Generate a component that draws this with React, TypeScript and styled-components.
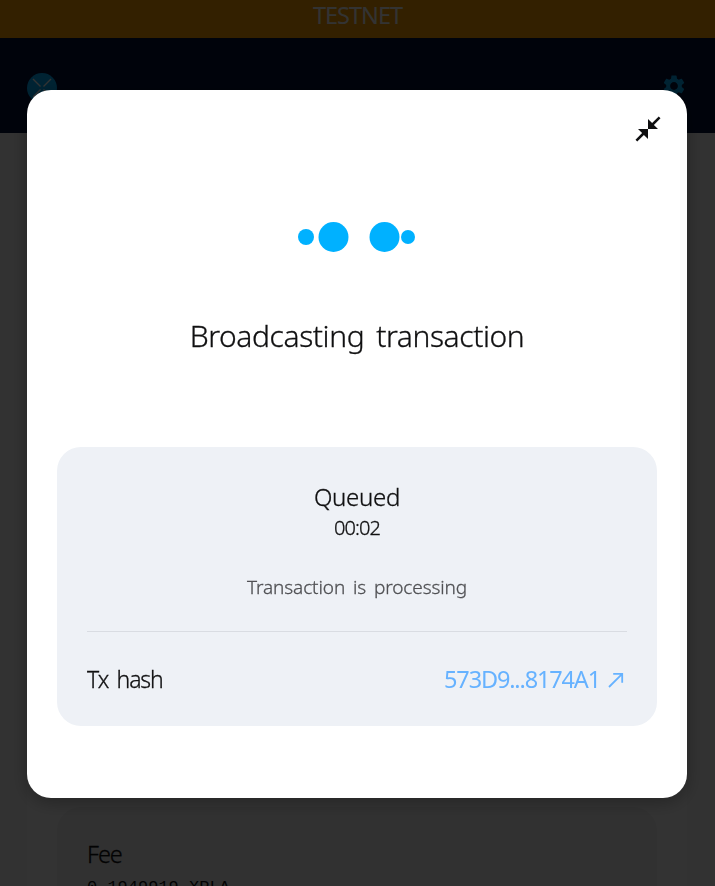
import React from 'react';
import styled, { createGlobalStyle } from 'styled-components';
import { MdCloseFullscreen, MdSettings } from 'react-icons/md';

const GlobalStyle = createGlobalStyle`
  * { box-sizing: border-box; }
  html, body { margin: 0; height: 100%; overflow: hidden; }
  body { font-family: "Noto Sans", "Open Sans", sans-serif; color: #101011; background: #fafafa; }
  h1, h2, p { margin: 0; font-weight: 300; -webkit-text-stroke: 0.3px currentColor; }
`;

const Page = styled.div`
  display: flex;
  flex-direction: column;
  height: 100vh;
  overflow: hidden;
`;

const NetworkBanner = styled.div`
  flex: none;
  height: 38px;
  background: #ffa000;
  color: #fff;
  text-align: center;
  font-size: 23.5px;
  line-height: 31px;
  letter-spacing: -1px;
`;

const Header = styled.header`
  flex: none;
  height: 95px;
  padding: 35px 28px 0 27px;
  display: flex;
  justify-content: space-between;
  align-items: flex-start;
  background: #00123a;
  color: #00b1ff;
`;

const SettingsIcon = styled(MdSettings)`
  width: 26px;
  height: 26px;
`;

const Body = styled.main`
  flex: 1;
  min-height: 0;
  margin: 0 28px 0 27px;
  padding: 674px 30px 0;
  background: #fff;
  overflow: hidden;
`;

const FeeCard = styled.section`
  height: 200px;
  border-radius: 24px;
  padding: 30px 30px 0;
  background: #f2f3f4;
`;

const FeeTitle = styled.h2`
  font-size: 23.5px;
  line-height: 34px;
  letter-spacing: -1px;
`;

const FeeAmount = styled.p`
  font-family: "Liberation Mono", monospace;
  font-size: 17px;
  line-height: 34px;
  -webkit-text-stroke: 0;
`;

const Overlay = styled.div`
  position: fixed;
  inset: 0;
  padding: 90px 28px 88px 27px;
  background: rgba(0, 0, 0, 0.8);
`;

const Dialog = styled.div`
  height: 708px;
  padding: 24px 24px 0 30px;
  display: flex;
  flex-direction: column;
  border-radius: 24px;
  background: #fff;
  box-shadow: 0 4px 18px rgba(0, 0, 0, 0.3);
`;

const CollapseButton = styled.button`
  align-self: flex-end;
  width: 30px;
  height: 30px;
  padding: 0;
  border: 0;
  background: none;
  color: #101011;
`;

const CollapseIcon = styled(MdCloseFullscreen)`
  display: block;
  width: 30px;
  height: 30px;
`;

const Loader = styled.svg`
  align-self: center;
  flex: none;
  width: 118px;
  height: 32px;
  margin: 77px 8px 0 0;
  fill: #00b1ff;
`;

const Title = styled.h1`
  margin: 61px 6px 0 0;
  text-align: center;
  font-size: 30px;
  line-height: 44px;
  letter-spacing: -0.4px;
  word-spacing: 4.5px;
`;

const Card = styled.section`
  height: 279px;
  flex: none;
  margin: 89px 6px 0 0;
  padding: 34px 30px 0;
  border-radius: 24px;
  background: #eef1f6;
  text-align: center;
`;

const Status = styled.h2`
  font-size: 24px;
  line-height: 32px;
  letter-spacing: -0.3px;
`;

const Timer = styled.p`
  font-size: 20px;
  line-height: 30px;
  letter-spacing: -0.9px;
`;

const Note = styled.p`
  margin-top: 29px;
  padding-bottom: 28px;
  font-size: 19px;
  line-height: 31px;
  letter-spacing: -0.1px;
  word-spacing: 3px;
  color: #505154;
  border-bottom: 1px solid #d9dce2;
`;

const HashRow = styled.div`
  height: 94px;
  padding-bottom: 1px;
  display: flex;
  align-items: center;
  justify-content: space-between;
  font-size: 23.5px;
`;

const HashLabel = styled.span`
  font-weight: 300;
  font-size: 23px;
  -webkit-text-stroke: 0.3px currentColor;
  letter-spacing: -1.1px;
  word-spacing: 3.5px;
`;

const HashLink = styled.a`
  display: flex;
  align-items: center;
  color: #66b2ff;
`;

const HashValue = styled.span`
  letter-spacing: -1.15px;
`;

const LinkArrow = styled.svg`
  width: 18px;
  height: 18px;
  margin: 2px 2px 0 7px;
  fill: none;
  stroke: currentColor;
  stroke-width: 1.8;
`;

export default function App() {
  return (
    <>
      <GlobalStyle />
      <Page>
        <NetworkBanner>TESTNET</NetworkBanner>
        <Header>
          <svg width="30" height="30" viewBox="0 0 30 30">
            <circle cx="15" cy="15" r="15" fill="#00b1ff" />
            <path d="M6 6l7.5 7.5M24 6l-7.5 7.5M6 24l7.5-7.5M24 24l-7.5-7.5" stroke="#ffffff" strokeWidth="1.4" />
          </svg>
          <SettingsIcon />
        </Header>
        <Body>
          <FeeCard>
            <FeeTitle>Fee</FeeTitle>
            <FeeAmount>0.1949919 XPLA</FeeAmount>
          </FeeCard>
        </Body>
      </Page>
      <Overlay>
        <Dialog role="dialog" aria-modal="true">
          <CollapseButton aria-label="Minimize"><CollapseIcon /></CollapseButton>
          <Loader viewBox="0 0 118 32">
            <circle cx="9" cy="16" r="8" />
            <circle cx="36.5" cy="16" r="15" />
            <circle cx="87.5" cy="16" r="15" />
            <circle cx="111" cy="16" r="7" />
          </Loader>
          <Title>Broadcasting transaction</Title>
          <Card>
            <Status>Queued</Status>
            <Timer>00:02</Timer>
            <Note>Transaction is processing</Note>
            <HashRow>
              <HashLabel>Tx hash</HashLabel>
              <HashLink>
                <HashValue>573D9...8174A1</HashValue>
                <LinkArrow viewBox="0 0 18 18">
                  <path d="M2 16L15.2 2.8M6.2 2.8h9v9" />
                </LinkArrow>
              </HashLink>
            </HashRow>
          </Card>
        </Dialog>
      </Overlay>
    </>
  );
}
